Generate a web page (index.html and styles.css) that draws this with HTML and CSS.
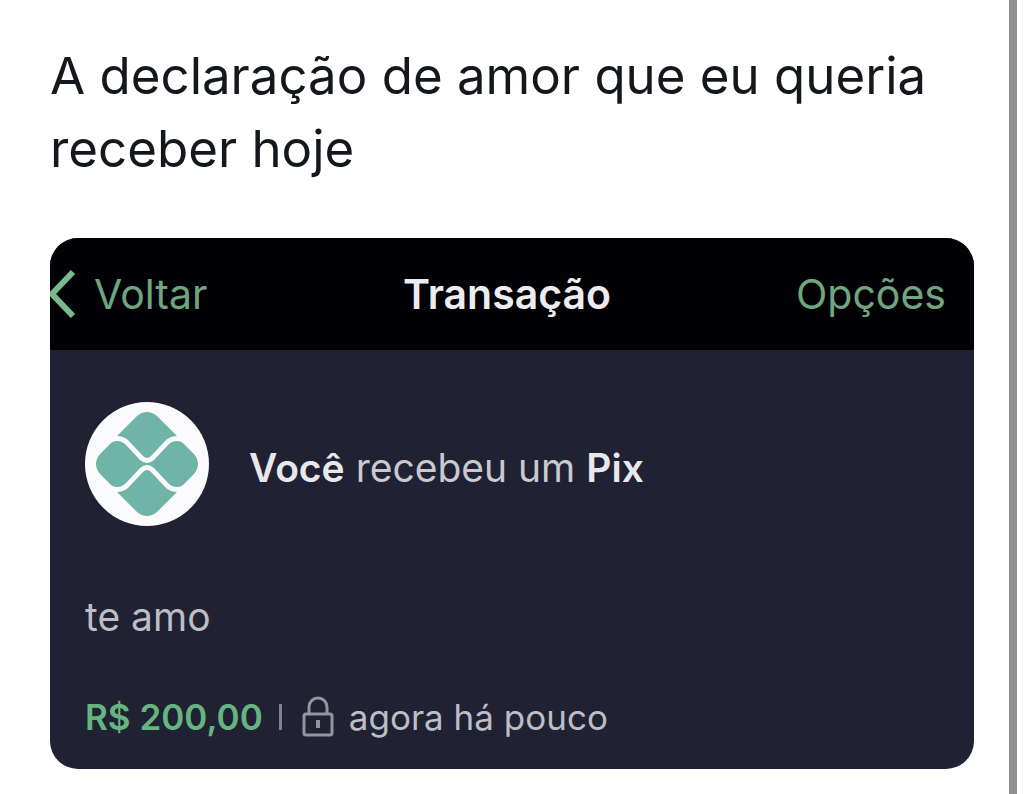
FILE: index.html
```html
<!DOCTYPE html>
<html lang="pt-BR">
  <head>
    <meta charset="UTF-8" />
    <meta name="viewport" content="width=device-width, initial-scale=1.0" />
    <title>Transação</title>
    <link rel="stylesheet" href="styles.css">
  </head>
  <body>
    <main class="post">
      <p class="post-text">A declaração de amor que eu queria receber hoje</p>

      <section class="card">
        <header class="card-header">
          <button type="button" class="nav-button back">
            <svg class="chevron" viewBox="0 0 26 50" aria-hidden="true">
              <path d="M23 3 L2 25 L23 47" />
            </svg>
            Voltar
          </button>
          <h1 class="card-title">Transação</h1>
          <button type="button" class="nav-button options">Opções</button>
        </header>

        <div class="card-body">
          <div class="sender">
            <svg class="pix-logo" viewBox="0 0 124 124" aria-hidden="true">
              <circle class="disc" cx="62" cy="62" r="62" />
              <path class="mark" d="M52 14 Q62 6 72 14 L92 34 Q86 34 81 38 L66 54 Q62 58 58 54 L43 38 Q38 34 32 34 Z" />
              <path class="mark" d="M52 110 Q62 118 72 110 L92 90 Q86 90 81 86 L66 70 Q62 66 58 70 L43 86 Q38 90 32 90 Z" />
              <path class="mark" d="M15 52 L26 41 Q28 39 32 39 Q37 39 41 43 L55 58 Q62 64 69 58 L83 43 Q87 39 92 39 Q96 39 98 41 L109 52 Q117 62 109 72 L98 83 Q96 85 92 85 Q87 85 83 81 L69 66 Q62 60 55 66 L41 81 Q37 85 32 85 Q28 85 26 83 L15 72 Q7 62 15 52 Z" />
            </svg>
            <p class="message"><strong>Você</strong> recebeu um <strong>Pix</strong></p>
          </div>

          <p class="note">te amo</p>

          <p class="details">
            <strong class="amount">R$ 200,00</strong>
            <span class="divider"></span>
            <svg class="lock" viewBox="0 0 32 42" aria-hidden="true">
              <path d="M7 18 V11 A9 9 0 0 1 25 11 V18" />
              <rect x="2" y="18" width="28" height="21" rx="2" />
              <path class="keyhole" d="M16 24 V32" />
            </svg>
            <span>agora há pouco</span>
          </p>
        </div>
      </section>
    </main>
  </body>
</html>
```
FILE: styles.css
```css
* {
  margin: 0;
  padding: 0;
  box-sizing: border-box;
}

body {
  display: flex;
  min-height: 100vh;
  padding-right: 7px;
  background-color: #fff;
  font-family: Inter, "Liberation Sans", sans-serif;
}

.post {
  flex: 1;
  padding: 39px 35px 24px 50px;
  border-right: 8px solid #8f8f8f;
}

.post-text {
  color: #14171c;
  font-size: 51px;
  line-height: 73px;
}

/* Transaction card */
.card {
  margin-top: 53px;
  overflow: hidden;
  border-radius: 28px;
  background-color: #202132;
}

.card-header {
  display: grid;
  grid-template-columns: 1fr auto 1fr;
  align-items: center;
  height: 112px;
  padding-right: 10px;
  background-color: #020105;
}

.card-title {
  color: #ececef;
  font-size: 41px;
  font-weight: 600;
}

.nav-button {
  display: flex;
  align-items: center;
  gap: 18px;
  border: none;
  background: none;
  color: #6fa57f;
  font-family: inherit;
  font-size: 41px;
  cursor: pointer;
}

.options {
  justify-self: end;
  padding-right: 18px;
}

.chevron {
  width: 26px;
  height: 50px;
  fill: none;
  stroke: #78b98e;
  stroke-width: 6;
}

.card-body {
  padding: 52px 35px 28px;
}

.sender {
  display: flex;
  align-items: center;
  gap: 40px;
}

.pix-logo {
  width: 124px;
  height: 124px;
}

.disc {
  fill: #fbfafd;
}

.mark {
  fill: #70b3a8;
}

.message {
  padding-top: 6px;
  color: #c9c9d0;
  font-size: 39px;
}

.message strong {
  color: #e8e8ec;
  font-weight: 600;
}

.note,
.details {
  color: #bdbdc5;
  line-height: 48px;
}

.note {
  margin-top: 67px;
  font-size: 39px;
}

.details {
  display: flex;
  align-items: center;
  margin-top: 52px;
  font-size: 35px;
}

.amount {
  color: #66b581;
  font-weight: 600;
}

.divider {
  width: 3px;
  height: 26px;
  margin: 0 20px 0 16px;
  background-color: #85808f;
}

.lock {
  width: 32px;
  height: 42px;
  margin-right: 15px;
  fill: none;
  stroke: #94949c;
  stroke-width: 3;
}

.lock .keyhole {
  stroke-width: 4;
}
```
